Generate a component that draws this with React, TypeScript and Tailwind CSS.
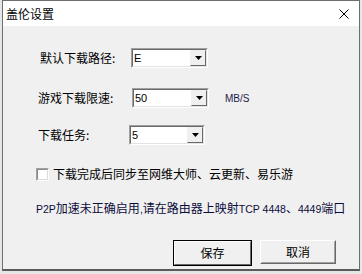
import React from "react";

const cjk = { fontFamily: '"Noto Sans CJK SC", "Liberation Sans", sans-serif' };

function Combo({ value, width = 77 }: { value: string; width?: number }) {
  return (
    <div
      className="h-[20px] flex border border-t-[#a0a0a0] border-l-[#a0a0a0] border-r-white border-b-white"
      style={{ width }}
    >
      <div className="flex flex-1 border border-t-[#696969] border-l-[#696969] border-r-[#e3e3e3] border-b-[#e3e3e3] bg-white">
        <span className="flex-1 pl-[1px] leading-[16px] text-[11px] text-black font-['Liberation_Sans',sans-serif]">
          {value}
        </span>
        <div className="w-[16px] h-[16px] flex items-center justify-center bg-[#f0f0f0] border border-t-[#f0f0f0] border-l-[#f0f0f0] border-r-[#696969] border-b-[#696969]">
          <svg width="7" height="4" viewBox="0 0 7 4">
            <path d="M0 0h7L3.5 4z" fill="#000" />
          </svg>
        </div>
      </div>
    </div>
  );
}

export default function App() {
  return (
    <div className="w-[362px] h-[274px] bg-[#e6e6e6] overflow-hidden" style={cjk}>
      <div className="ml-[2px] w-[358px] h-[271px] flex flex-col border border-[#6e6e6e] border-b-2 border-b-[#5a5a5a]">
        {/* title bar */}
        <div className="h-[25px] bg-white flex items-center justify-between pl-[3px] pr-[10px]">
          <span className="text-[12px] leading-[14px] text-black">盖伦设置</span>
          <svg width="10" height="10" viewBox="0 0 10 10">
            <path d="M0.5 0.5L9.5 9.5M9.5 0.5L0.5 9.5" stroke="#000" strokeWidth="1" />
          </svg>
        </div>

        {/* body */}
        <div className="flex-1 bg-[#f0f0f0] flex flex-col text-[12px] text-black">
          <div className="mt-[22px] flex items-center pl-[37px]">
            <span className="w-[91px] leading-[20px]">默认下载路径:</span>
            <Combo value="E" />
          </div>

          <div className="mt-[20px] flex items-center pl-[35px]">
            <span className="w-[94px] leading-[20px]">游戏下载限速:</span>
            <Combo value="50" />
            <span className="ml-[16px] text-[10px] text-[#1c1c4a] font-['Liberation_Sans',sans-serif]">MB/S</span>
          </div>

          <div className="mt-[17px] flex items-center pl-[35px]">
            <span className="w-[91px] leading-[20px]">下载任务:</span>
            <Combo value="5" width={76} />
          </div>

          <div className="mt-[22px] flex items-center pl-[33px] h-[14px]">
            <div className="w-[13px] h-[13px] border border-t-[#a0a0a0] border-l-[#a0a0a0] border-r-white border-b-white">
              <div className="w-full h-full bg-white border border-t-[#8a8a8a] border-l-[#8a8a8a] border-r-[#dcdcdc] border-b-[#dcdcdc]" />
            </div>
            <span className="ml-[4px] leading-[14px]">下载完成后同步至网维大师、云更新、易乐游</span>
          </div>

          <div className="mt-[19px] pl-[33px] leading-[16px] text-[#0c0c3c] whitespace-nowrap">
            <span className="text-[10.5px] font-['Liberation_Sans',sans-serif]">P2P</span>
            加速未正确启用
            <span className="text-[10.5px] font-['Liberation_Sans',sans-serif]">,</span>
            请在路由器上映射
            <span className="text-[10.5px] font-['Liberation_Sans',sans-serif]">TCP 4448</span>
            、
            <span className="text-[10.5px] font-['Liberation_Sans',sans-serif]">4449</span>
            端口
          </div>

          <div className="mt-[23px] flex items-start pl-[170px] gap-[8px]">
            <button className="w-[79px] h-[26px] border border-black bg-[#f0f0f0] flex">
              <span className="flex-1 flex items-center justify-center border border-t-white border-l-white border-r-[#696969] border-b-[#696969] text-[12px] leading-[14px] text-black">
                保存
              </span>
            </button>
            <button className="w-[76px] h-[24px] bg-[#f0f0f0] flex border border-t-white border-l-white border-r-[#696969] border-b-[#696969]">
              <span className="flex-1 flex items-center justify-center border border-t-[#f0f0f0] border-l-[#f0f0f0] border-r-[#a0a0a0] border-b-[#a0a0a0] text-[12px] leading-[14px] text-black">
                取消
              </span>
            </button>
          </div>
        </div>
      </div>
    </div>
  );
}
